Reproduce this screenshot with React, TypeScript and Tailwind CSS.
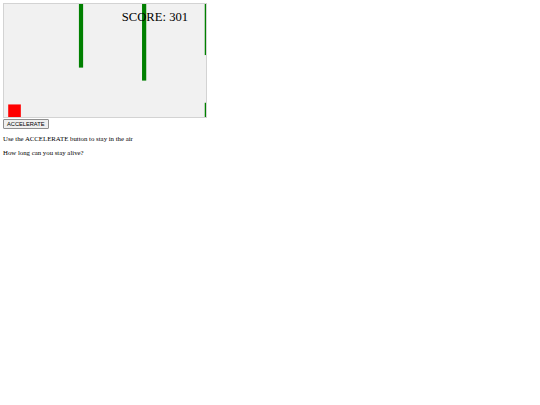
import React from 'react';

// Game area drawn in 480x270 units, scaled down into the bordered box
const obstacles = [
  { x: 178, y: 0, w: 10, h: 152 },
  { x: 328, y: 0, w: 10, h: 183 },
  { x: 477, y: 0, w: 10, h: 122 },
  { x: 477, y: 236, w: 10, h: 34 },
];

const GameArea: React.FC = () => (
  <div className="w-[204px] h-[115px] border border-[#d3d3d3] bg-[#f1f1f1]">
    <svg width="202" height="113" viewBox="0 0 480 270" preserveAspectRatio="none" className="block">
      {obstacles.map((o, i) => (
        <rect key={i} x={o.x} y={o.y} width={o.w} height={o.h} fill="#008000" />
      ))}
      <rect x="10" y="240" width="30" height="30" fill="#ff0000" />
      <text x="280" y="40" fontSize="30" fontFamily="'Liberation Serif', serif" fill="#000">
        SCORE: 301
      </text>
    </svg>
  </div>
);

export default function App() {
  return (
    <div className="min-h-[405px] w-[540px] bg-white p-[3px] font-['Liberation_Serif',serif] text-black">
      <GameArea />
      <button className="mt-[1px] block h-[10px] border border-[#8f8f8f] bg-[#efefef] px-[3px] font-['Liberation_Sans',sans-serif] text-[5.7px] leading-[8px] rounded-[1px]">
        ACCELERATE
      </button>
      <p className="mt-[6px] text-[6.8px] leading-[8px]">Use the ACCELERATE button to stay in the air</p>
      <p className="mt-[6px] text-[6.8px] leading-[8px]">How long can you stay alive?</p>
    </div>
  );
}
